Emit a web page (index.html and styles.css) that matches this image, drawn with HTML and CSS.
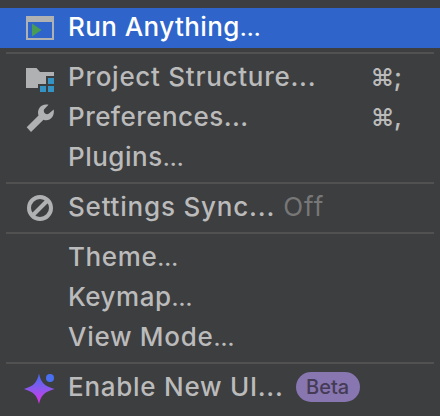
FILE: index.html
```html
<!DOCTYPE html>
<html lang="en">
<head>
<meta charset="utf-8">
<title>Settings menu</title>
<link rel="stylesheet" href="styles.css">
</head>
<body>
<div class="menu" role="menu">
  <div class="item selected" role="menuitem">
    <svg class="icon" viewBox="0 0 32 32"><path fill="#afb1b3" fill-rule="evenodd" d="M2 4h28v24H2zM4 10v16h24V10z"/><path fill="#499c54" d="M8 11.500 17.500 18 8 24.500z"/></svg>
    <span class="label run">Run Anything<span class="dots">…</span></span>
  </div>
  <hr>
  <div class="item" role="menuitem">
    <svg class="icon" viewBox="0 0 32 32"><path fill="#afb1b3" d="M2 6h10.500l3.500 4h14v4h-8v8h-8v4H2z"/><path fill="#3592c4" d="M24 16h6v6h-6zM16 24h6v6h-6zM24 24h6v6h-6z"/></svg>
    <span class="label project">Project Structure...</span>
    <span class="shortcut"><span class="command">⌘</span>;</span>
  </div>
  <div class="item" role="menuitem">
    <svg class="icon" viewBox="0 0 32 32"><path fill="#afb1b3" d="M2.700 25.300 14.500 13.500C12.500 7.500 17 1 24.500 2.700L20 7.500C19 10.500 22 13.500 25 11.500L29.700 7.500C31 15 25 20 19.500 17.700L7 30z"/></svg>
    <span class="label prefs">Preferences...</span>
    <span class="shortcut"><span class="command">⌘</span>,</span>
  </div>
  <div class="item" role="menuitem"><span class="icon"></span><span class="label plugins">Plugins<span class="dots">…</span></span></div>
  <hr>
  <div class="item" role="menuitem">
    <svg class="icon" viewBox="0 0 32 32"><g fill="none" stroke="#afb1b3" stroke-width="4"><circle cx="16" cy="16" r="11"/><path d="M8.500 23.500 23.500 8.500"/></g></svg>
    <span class="label sync">Settings Sync...</span><span class="state">Off</span>
  </div>
  <hr>
  <div class="item" role="menuitem"><span class="icon"></span><span class="label theme">Theme<span class="dots">…</span></span></div>
  <div class="item" role="menuitem"><span class="icon"></span><span class="label keymap">Keymap<span class="dots">…</span></span></div>
  <div class="item" role="menuitem"><span class="icon"></span><span class="label view">View Mode<span class="dots">…</span></span></div>
  <hr>
  <div class="item" role="menuitem">
    <svg class="icon" viewBox="0 0 32 32"><defs><linearGradient id="spark" x1="0" y1="0" x2="0" y2="1"><stop offset=".1" stop-color="#5068f4"/><stop offset=".5" stop-color="#8a58ec"/><stop offset=".9" stop-color="#d038ec"/></linearGradient></defs><path fill="url(#spark)" d="M15 1.500C17 10.500 20 14 30.500 17 20 20 17 23.500 15 32 13 23.500 10 20 0 17 10 14 13 10.500 15 1.500z"/><circle cx="26" cy="6" r="4" fill="#4a70f2"/></svg>
    <span class="label enable">Enable New UI...</span><span class="badge">Beta</span>
  </div>
</div>
</body>
</html>
```
FILE: styles.css
```css
* { box-sizing: border-box; }
body { margin: 0; background: #3d3e40; }
.menu {
  width: 440px;
  height: 416px;
  padding-top: 8px;
  overflow: hidden;
  background: #3d3e40;
  color: #bbbbbb;
  font: 450 26px/40px Inter, "Liberation Sans", sans-serif;
}
.item {
  display: flex;
  align-items: center;
  height: 40px;
  padding: 0 38px 0 24px;
  white-space: pre;
}
.selected { background: #2f65ca; color: #ffffff; font-weight: 500; }
hr {
  height: 2px;
  margin: 4px 6px;
  border: 0;
  background: #515151;
}
.icon { flex: none; width: 32px; height: 32px; margin-right: 12px; }
.label { height: 40px; line-height: 38px; letter-spacing: 0.730px; }
.dots { font-size: 23px; line-height: 1; }
.run { letter-spacing: 0.400px; }
.project { letter-spacing: 0.720px; }
.prefs { letter-spacing: 0.450px; }
.plugins { letter-spacing: 0.500px; }
.theme { letter-spacing: 0.600px; }
.keymap { letter-spacing: 0.500px; }
.view { letter-spacing: 0.700px; }
.sync { letter-spacing: 0.800px; }
.shortcut { margin-left: auto; height: 40px; line-height: 38px; font-weight: 500; }
.command { font-size: 24px; line-height: 1; letter-spacing: -0.500px; }
.state { margin-left: 8px; height: 40px; line-height: 38px; color: #777777; letter-spacing: 1px; font-weight: 400; }
.badge {
  width: 64px;
  height: 30px;
  margin-left: 12px;
  margin-top: -2px;
  border-radius: 15px;
  background: #8776b0;
  color: #453b55;
  font-size: 20px;
  line-height: 30px;
  text-align: center;
}
```
